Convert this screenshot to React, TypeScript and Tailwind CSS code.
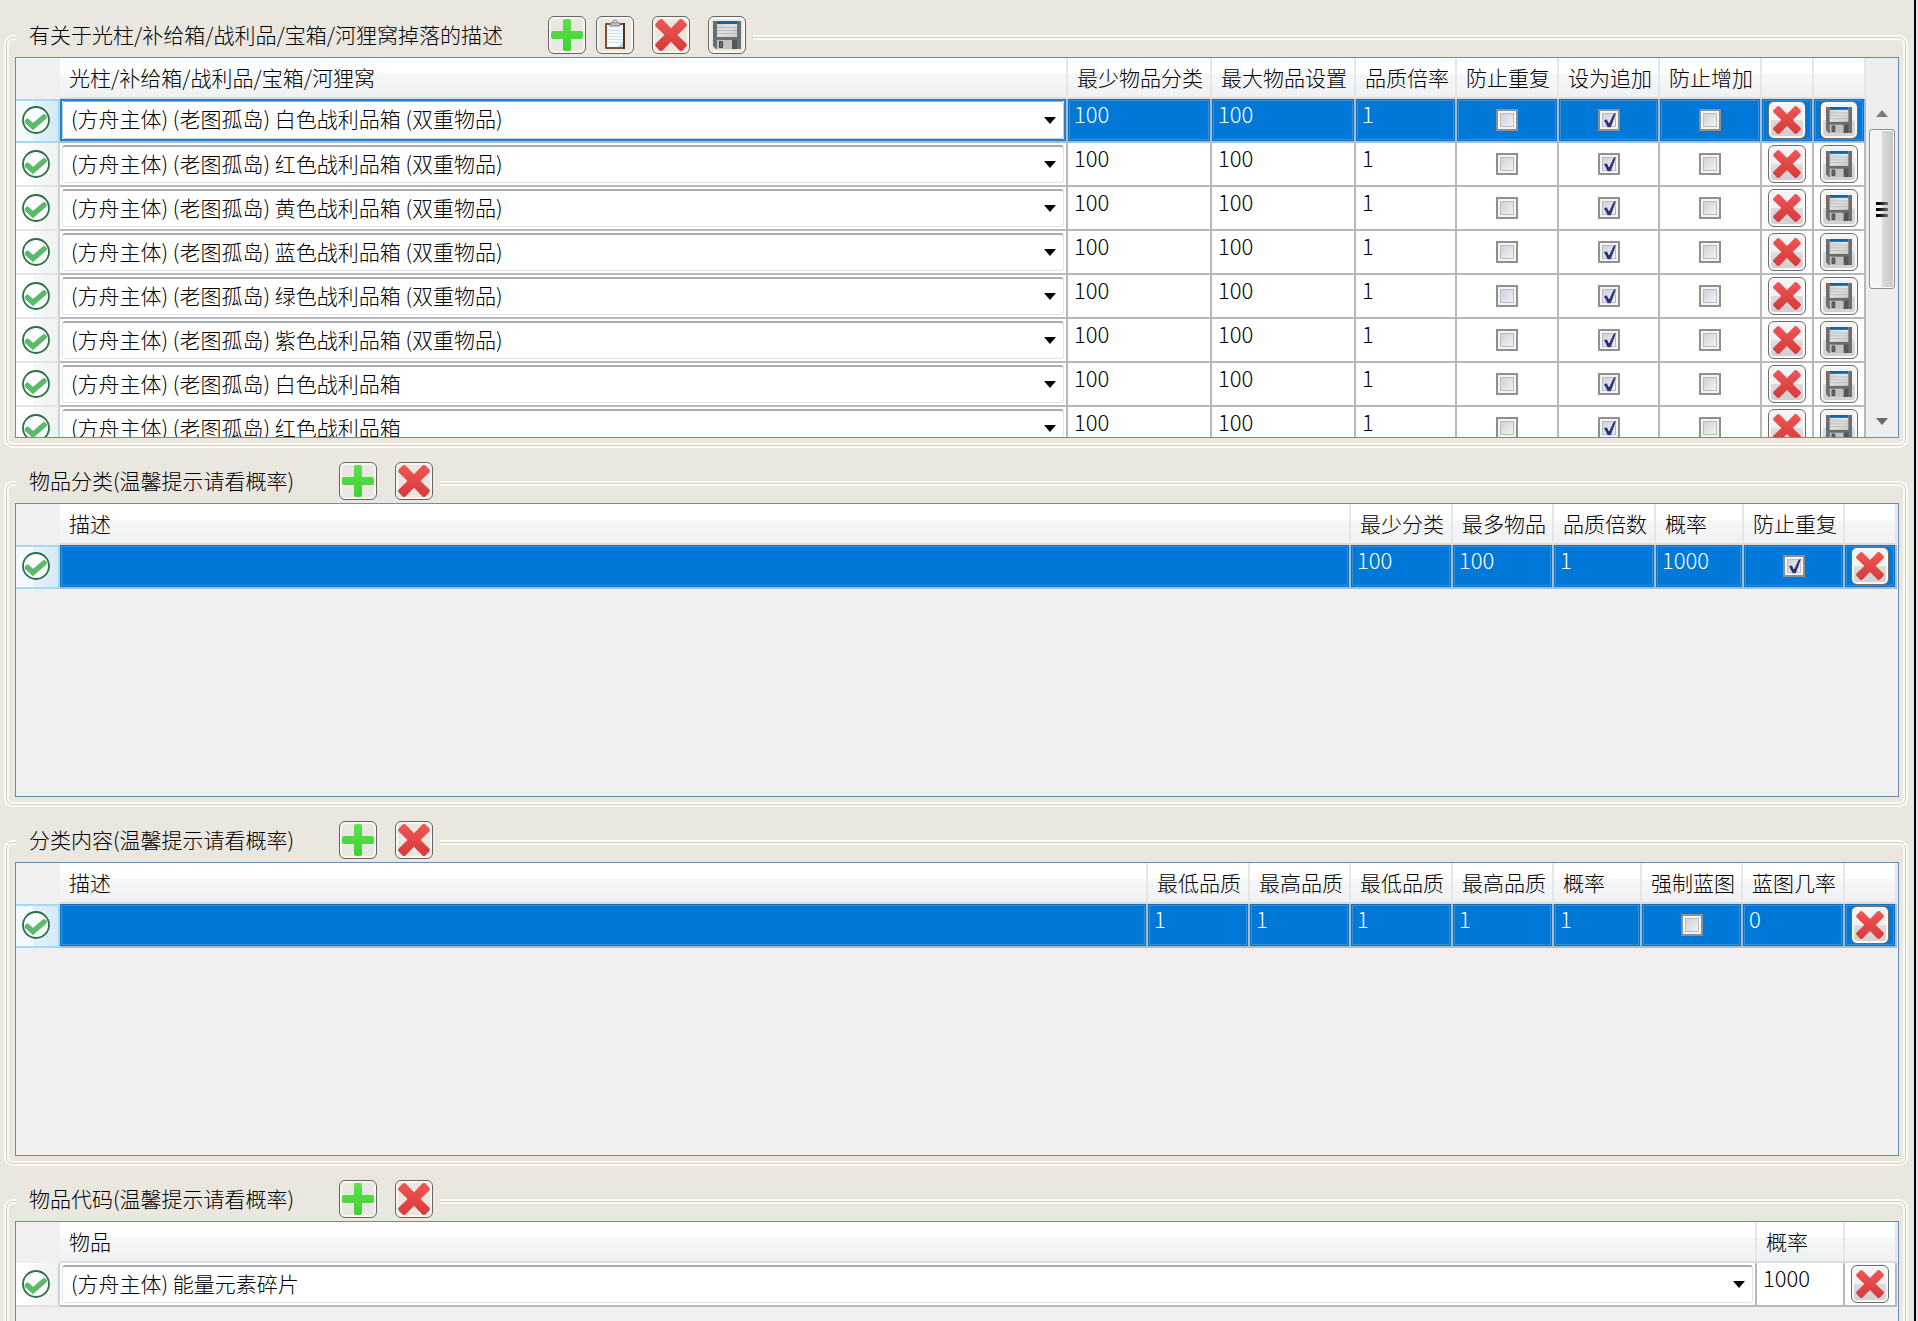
import React, {useState} from 'react';
import clsx from 'clsx';

type Column = {
  title: string;
  width?: string;
};

type Supply = {
  name: string;
  min: number;
  max: number;
  quality: number;
  noRepeat: boolean;
  append: boolean;
  noIncrease: boolean;
};

const supplyColumns: Column[] = [
  {title: '光柱/补给箱/战利品/宝箱/河狸窝'},
  {title: '最少物品分类', width: 'w-36'},
  {title: '最大物品设置', width: 'w-36'},
  {title: '品质倍率', width: 'w-[101px]'},
  {title: '防止重复', width: 'w-[102px]'},
  {title: '设为追加', width: 'w-[101px]'},
  {title: '防止增加', width: 'w-[102px]'},
  {title: '', width: 'w-[52px]'},
  {title: '', width: 'w-[52px]'},
];

const categoryColumns: Column[] = [
  {title: '描述'},
  {title: '最少分类', width: 'w-[102px]'},
  {title: '最多物品', width: 'w-[101px]'},
  {title: '品质倍数', width: 'w-[102px]'},
  {title: '概率', width: 'w-[88px]'},
  {title: '防止重复', width: 'w-[101px]'},
  {title: '', width: 'w-[52px]'},
];

const contentColumns: Column[] = [
  {title: '描述'},
  {title: '最低品质', width: 'w-[102px]'},
  {title: '最高品质', width: 'w-[101px]'},
  {title: '最低品质', width: 'w-[102px]'},
  {title: '最高品质', width: 'w-[101px]'},
  {title: '概率', width: 'w-[88px]'},
  {title: '强制蓝图', width: 'w-[101px]'},
  {title: '蓝图几率', width: 'w-[102px]'},
  {title: '', width: 'w-[52px]'},
];

const itemColumns: Column[] = [
  {title: '物品'},
  {title: '概率', width: 'w-[88px]'},
  {title: '', width: 'w-[52px]'},
];

const supplyNames = [
  '(方舟主体) (老图孤岛) 白色战利品箱 (双重物品)',
  '(方舟主体) (老图孤岛) 红色战利品箱 (双重物品)',
  '(方舟主体) (老图孤岛) 黄色战利品箱 (双重物品)',
  '(方舟主体) (老图孤岛) 蓝色战利品箱 (双重物品)',
  '(方舟主体) (老图孤岛) 绿色战利品箱 (双重物品)',
  '(方舟主体) (老图孤岛) 紫色战利品箱 (双重物品)',
  '(方舟主体) (老图孤岛) 白色战利品箱',
  '(方舟主体) (老图孤岛) 红色战利品箱',
];

const supplies: Supply[] = supplyNames.map((name) => ({
  name,
  min: 100,
  max: 100,
  quality: 1,
  noRepeat: false,
  append: true,
  noIncrease: false,
}));

const PlusIcon = () => (
  <svg viewBox="0 0 32 32" className="h-8 w-8 shrink-0">
    <defs>
      <linearGradient id="plus" x1="0" y1="0" x2="0" y2="1">
        <stop offset="0" stopColor="#5be04f" />
        <stop offset="1" stopColor="#3fd232" />
      </linearGradient>
    </defs>
    <path
      d="M14 0h4a2 2 0 0 1 2 2v10h10a2 2 0 0 1 2 2v4a2 2 0 0 1-2 2H20v10a2 2 0 0 1-2 2h-4a2 2 0 0 1-2-2V20H2a2 2 0 0 1-2-2v-4a2 2 0 0 1 2-2h10V2a2 2 0 0 1 2-2z"
      fill="url(#plus)"
    />
  </svg>
);

const CrossIcon = ({className}: {className: string}) => (
  <svg viewBox="0 0 32 32" className={clsx('shrink-0', className)}>
    <defs>
      <linearGradient id="cross" x1="0" y1="0" x2="0" y2="1">
        <stop offset="0" stopColor="#f05654" />
        <stop offset="1" stopColor="#d63a3b" />
      </linearGradient>
    </defs>
    <path
      d="M4.500 .8 1 4.200a2.500 2.500 0 0 0 0 3.500L9.500 16 1 24.300a2.500 2.500 0 0 0 0 3.500l3.300 3.400a2.500 2.500 0 0 0 3.500 0L16 22.800l8.200 8.400a2.500 2.500 0 0 0 3.500 0l3.300-3.400a2.500 2.500 0 0 0 0-3.500L22.500 16 31 7.700a2.500 2.500 0 0 0 0-3.500L27.700.8a2.500 2.500 0 0 0-3.500 0L16 9.200 7.800.8a2.500 2.500 0 0 0-3.300 0z"
      fill="url(#cross)"
    />
  </svg>
);

const ClipboardIcon = () => (
  <svg viewBox="0 0 32 32" className="h-8 w-8 shrink-0">
    <rect x="6" y="4" width="20" height="26" rx="1" fill="#7c5230" />
    <rect x="24" y="4" width="2" height="26" fill="#4f3019" />
    <rect x="8" y="6" width="16" height="22" fill="#f4fafd" />
    <path d="M8 11.500h16M8 14.500h16M8 17.500h16M8 20.500h16M8 23.500h16" stroke="#c9e3f1" />
    <path d="M19 28h5v-5z" fill="#c5d3da" />
    <path d="M11 7V5.500a2 2 0 0 1 2-2h1a2 2 0 0 1 4 0h1a2 2 0 0 1 2 2V7z" fill="#b9bcbc" stroke="#7f8383" />
    <circle cx="16" cy="2.500" r="1.500" fill="#efefef" stroke="#8b8f8f" />
  </svg>
);

const SaveIcon = ({className}: {className: string}) => (
  <svg viewBox="0 0 28 28" className={clsx('shrink-0', className)}>
    <defs>
      <linearGradient id="label" x1="0" y1="0" x2="1" y2="1">
        <stop offset="0" stopColor="#cfcfcf" />
        <stop offset=".5" stopColor="#e2e2e2" />
        <stop offset="1" stopColor="#cccccc" />
      </linearGradient>
    </defs>
    <path d="M0 0h28v28H3l-3-3z" fill="#6e6e6e" />
    <path d="M4 0h20v16H4z" fill="url(#label)" />
    <path d="M4 0h20v3H4z" fill="#1263a8" />
    <path d="M4 6.500h20M4 9.500h20M4 12.500h20" stroke="#bdbdbd" />
    <path d="M4 19h20v9H4z" fill="#555" />
    <path d="M4 19h15v9H4z" fill="#c2c2c2" />
    <path d="M6.500 20.500h3v6h-3z" fill="#6b6b6b" stroke="#444" />
  </svg>
);

const OkIcon = () => (
  <svg viewBox="0 0 28 28" className="ml-1.5 h-7 w-7">
    <circle cx="14" cy="14" r="13" fill="#fcfefd" stroke="#2d7049" strokeWidth="1.800" />
    <path d="M5.500 15.500l5.500 5L22 11" fill="none" stroke="#5cba68" strokeWidth="5.500" strokeLinecap="round" />
  </svg>
);

const ToolButton = ({label, children}: {label: string; children: React.ReactNode}) => (
  <button
    type="button"
    aria-label={label}
    className="flex h-[38px] w-[38px] items-center justify-center rounded-md border border-[#666] bg-[#e9e7e0] shadow-[inset_0_0_0_2px_#f7f6f3]"
  >
    {children}
  </button>
);

const CellButton = ({label, children}: {label: string; children: React.ReactNode}) => (
  <button
    type="button"
    aria-label={label}
    className="mx-auto flex h-[38px] w-[38px] items-center justify-center rounded-md border border-[#6c6c6c] bg-linear-to-b from-[#f3f3f3] from-50% via-[#dddddd] via-50% to-[#cfcfcf] shadow-[inset_0_0_0_2px_#f8f8f8]"
  >
    {children}
  </button>
);

const CheckBox = ({label, initial}: {label: string; initial: boolean}) => {
  const [checked, setChecked] = useState<boolean>(initial);

  return (
    <div className="relative mx-auto h-[22px] w-[22px]">
      <input
        type="checkbox"
        aria-label={label}
        checked={checked}
        onChange={(e) => setChecked(e.target.checked)}
        className="block h-[22px] w-[22px] appearance-none border-2 border-[#8e8f8f] bg-linear-to-br from-[#c6cad2] to-[#fafafa] shadow-[inset_0_0_0_2px_#f4f4f4,inset_0_0_0_3px_#b9bdc4]"
      />
      {checked && (
        <svg viewBox="0 0 22 22" className="pointer-events-none absolute inset-0 h-[22px] w-[22px]">
          <path d="M5.500 11l3.500-1 2 4L15.500 4.500l3-1L13 18.500H9.500z" fill="#2d3178" stroke="#fff" strokeWidth=".5" />
        </svg>
      )}
    </div>
  );
};

const Combo = ({label, value, options, focused}: {label: string; value: string; options: string[]; focused?: boolean}) => {
  const [selected, setSelected] = useState<string>(value);

  return (
    <div className="relative mx-0.5">
      <select
        aria-label={label}
        value={selected}
        onChange={(e) => setSelected(e.target.value)}
        className={clsx(
          'block h-[38px] w-full appearance-none rounded-[3px] border bg-white pb-1 pl-2 pr-9 text-black outline-none',
          focused
            ? 'border-[#b9cfe2] border-t-[#8fa9c0]'
            : 'border-[#dfe4ea] border-t-2 border-t-[#a9abb3]',
        )}
      >
        {options.map((option) => (
          <option key={option}>{option}</option>
        ))}
      </select>
      <svg viewBox="0 0 12 7" className="pointer-events-none absolute right-2 top-4 h-[7px] w-3">
        <path d="M0 0h12L6 7z" fill="#000" />
      </svg>
    </div>
  );
};

const Cell = ({active, children}: {active?: boolean; children?: React.ReactNode}) => (
  <td
    className={clsx(
      'border-b-2 border-r-2 p-0 align-middle',
      active
        ? 'border-[#a3bdd3] bg-[#0078d7] shadow-[inset_0_0_0_1px_#1470bd,inset_0_0_0_2px_#2f90e0]'
        : 'border-[#b8b8b8] bg-white',
    )}
  >
    {children}
  </td>
);

const NumberCell = ({active, value}: {active?: boolean; value: number}) => (
  <td
    className={clsx(
      'border-b-2 border-r-2 p-0 pl-1.5 align-top text-[22px] leading-7',
      active
        ? 'border-[#a3bdd3] bg-[#0078d7] text-white shadow-[inset_0_0_0_1px_#1470bd,inset_0_0_0_2px_#2f90e0]'
        : 'border-[#b8b8b8] bg-white text-black',
    )}
  >
    {value}
  </td>
);

const ComboCell = ({active, children}: {active?: boolean; children: React.ReactNode}) => (
  <td
    className={clsx(
      'border-b-2 border-r-2 bg-white p-0 align-middle',
      active ? 'border-[#a3bdd3] shadow-[inset_0_0_0_2px_#2a7fc9]' : 'border-[#b8b8b8]',
    )}
  >
    {children}
  </td>
);

const RowHeader = ({active}: {active?: boolean}) => (
  <th
    className={clsx(
      'border-b-2 border-r-2 p-0',
      active
        ? 'border-[#a5d9f1] bg-linear-to-r from-[#f3fafe] from-40% via-[#e4f2fa] via-40% to-[#d3eaf6] shadow-[inset_0_2px_0_#a5d9f1]'
        : 'border-b-[#e2e3e5] border-r-[#cfd0d2] bg-linear-to-r from-white from-40% via-[#f7f8f9] via-40% to-[#f0f1f3]',
    )}
  >
    <OkIcon />
  </th>
);

const DataTable = ({columns, children}: {columns: Column[]; children: React.ReactNode}) => (
  <table className="w-full table-fixed border-separate border-spacing-0">
    <thead>
      <tr className="h-[41px]">
        <th className="w-11 bg-[#f0f0f0] p-0" />
        {columns.map((column, i) => (
          <th
            key={i}
            className={clsx(
              'overflow-hidden whitespace-nowrap border-b-2 border-r-2 border-b-[#dadcde] border-r-[#e4e6e9] bg-linear-to-b from-white from-40% via-[#f6f7f9] via-40% to-[#f0f1f3] p-0 pb-0.5 pl-[9px] text-left font-light',
              column.width,
            )}
          >
            {column.title}
          </th>
        ))}
      </tr>
    </thead>
    <tbody>{children}</tbody>
  </table>
);

const ScrollBar = () => (
  <div className="flex w-8 shrink-0 flex-col items-center bg-[#ededed] pt-[52px] pb-3">
    <svg viewBox="0 0 12 7" className="h-[7px] w-3">
      <path d="M6 0l6 7H0z" fill="#7c7c7c" />
    </svg>
    <div className="mt-3 flex h-40 w-[26px] flex-col items-center justify-center gap-[3px] rounded-[3px] border border-[#8f8f8f] bg-linear-to-r from-[#f4f4f4] from-50% via-[#dcdcdc] via-50% to-[#c4c6c8] shadow-[inset_0_0_0_1px_#fafafa]">
      <span className="h-[3px] w-3 bg-linear-to-r from-black to-[#777]" />
      <span className="h-[3px] w-3 bg-linear-to-r from-black to-[#777]" />
      <span className="h-[3px] w-3 bg-linear-to-r from-black to-[#777]" />
    </div>
    <svg viewBox="0 0 12 7" className="mt-auto h-[7px] w-3">
      <path d="M0 0h12L6 7z" fill="#6a6a6a" />
    </svg>
  </div>
);

type GroupProps = {
  title: string;
  tools: React.ReactNode;
  height: string;
  children: React.ReactNode;
};

const Group = ({title, tools, height, children}: GroupProps) => (
  <section className="rounded-[9px] border-2 border-[#fbfaf7]">
    <div className="rounded-[7px] border border-[#d6cdbd]">
      <div className="rounded-md border-2 border-[#fbfaf7] pb-[5px] pl-1.5 pr-1">
        <div className="-mt-6 mb-[3px] ml-px flex h-[38px] w-fit items-center bg-[#e9e7e0] pl-[13px] pr-[7px]">
          <h2 className="mr-[45px] whitespace-nowrap pb-0.5">{title}</h2>
          {tools}
        </div>
        <div className={clsx('flex overflow-hidden border border-[#6b8cae] bg-[#f0f0f0]', height)}>{children}</div>
      </div>
    </div>
  </section>
);

const AddRemove = () => (
  <div className="flex gap-[18px]">
    <ToolButton label="添加">
      <PlusIcon />
    </ToolButton>
    <ToolButton label="删除">
      <CrossIcon className="h-8 w-8" />
    </ToolButton>
  </div>
);

const DeleteButton = () => (
  <CellButton label="删除">
    <CrossIcon className="h-7 w-7" />
  </CellButton>
);

const App = () => {
  return (
    <div className="flex h-screen overflow-hidden bg-[#e2e2e2] pr-0.5 font-['Noto_Sans_CJK_SC',sans-serif] text-[21px] leading-[30px] font-light text-black">
      <main className="flex min-w-0 flex-1 flex-col gap-[33px] border-r-2 border-black bg-[#e9e7e0] pl-1 pr-1.5 pt-[35px]">
        <Group
          title="有关于光柱/补给箱/战利品/宝箱/河狸窝掉落的描述"
          height="h-[381px]"
          tools={
            <>
              <div className="mr-[18px] flex gap-2.5">
                <ToolButton label="添加">
                  <PlusIcon />
                </ToolButton>
                <ToolButton label="粘贴">
                  <ClipboardIcon />
                </ToolButton>
              </div>
              <div className="flex gap-[18px]">
                <ToolButton label="删除">
                  <CrossIcon className="h-8 w-8" />
                </ToolButton>
                <ToolButton label="保存">
                  <SaveIcon className="h-7 w-7" />
                </ToolButton>
              </div>
            </>
          }
        >
          <div className="min-w-0 flex-1">
            <DataTable columns={supplyColumns}>
              {supplies.map((supply, i) => (
                <tr key={supply.name} className="h-11">
                  <RowHeader active={i === 0} />
                  <ComboCell active={i === 0}>
                    <Combo label={supplyColumns[0].title} value={supply.name} options={supplyNames} focused={i === 0} />
                  </ComboCell>
                  <NumberCell active={i === 0} value={supply.min} />
                  <NumberCell active={i === 0} value={supply.max} />
                  <NumberCell active={i === 0} value={supply.quality} />
                  <Cell active={i === 0}>
                    <CheckBox label="防止重复" initial={supply.noRepeat} />
                  </Cell>
                  <Cell active={i === 0}>
                    <CheckBox label="设为追加" initial={supply.append} />
                  </Cell>
                  <Cell active={i === 0}>
                    <CheckBox label="防止增加" initial={supply.noIncrease} />
                  </Cell>
                  <Cell active={i === 0}>
                    <DeleteButton />
                  </Cell>
                  <Cell active={i === 0}>
                    <CellButton label="保存">
                      <SaveIcon className="h-[26px] w-[26px]" />
                    </CellButton>
                  </Cell>
                </tr>
              ))}
            </DataTable>
          </div>
          <ScrollBar />
        </Group>

        <Group title="物品分类(温馨提示请看概率)" height="h-[294px]" tools={<AddRemove />}>
          <div className="min-w-0 flex-1 pr-px">
            <DataTable columns={categoryColumns}>
              <tr className="h-11">
                <RowHeader active />
                <Cell active />
                <NumberCell active value={100} />
                <NumberCell active value={100} />
                <NumberCell active value={1} />
                <NumberCell active value={1000} />
                <Cell active>
                  <CheckBox label="防止重复" initial />
                </Cell>
                <Cell active>
                  <DeleteButton />
                </Cell>
              </tr>
            </DataTable>
          </div>
        </Group>

        <Group title="分类内容(温馨提示请看概率)" height="h-[294px]" tools={<AddRemove />}>
          <div className="min-w-0 flex-1 pr-px">
            <DataTable columns={contentColumns}>
              <tr className="h-11">
                <RowHeader active />
                <Cell active />
                <NumberCell active value={1} />
                <NumberCell active value={1} />
                <NumberCell active value={1} />
                <NumberCell active value={1} />
                <NumberCell active value={1} />
                <Cell active>
                  <CheckBox label="强制蓝图" initial={false} />
                </Cell>
                <NumberCell active value={0} />
                <Cell active>
                  <DeleteButton />
                </Cell>
              </tr>
            </DataTable>
          </div>
        </Group>

        <Group title="物品代码(温馨提示请看概率)" height="h-[294px]" tools={<AddRemove />}>
          <div className="min-w-0 flex-1 pr-px">
            <DataTable columns={itemColumns}>
              <tr className="h-11">
                <RowHeader />
                <ComboCell>
                  <Combo label="物品" value="(方舟主体) 能量元素碎片" options={['(方舟主体) 能量元素碎片']} />
                </ComboCell>
                <NumberCell value={1000} />
                <Cell>
                  <DeleteButton />
                </Cell>
              </tr>
            </DataTable>
          </div>
        </Group>
      </main>
    </div>
  );
};

export default App;
